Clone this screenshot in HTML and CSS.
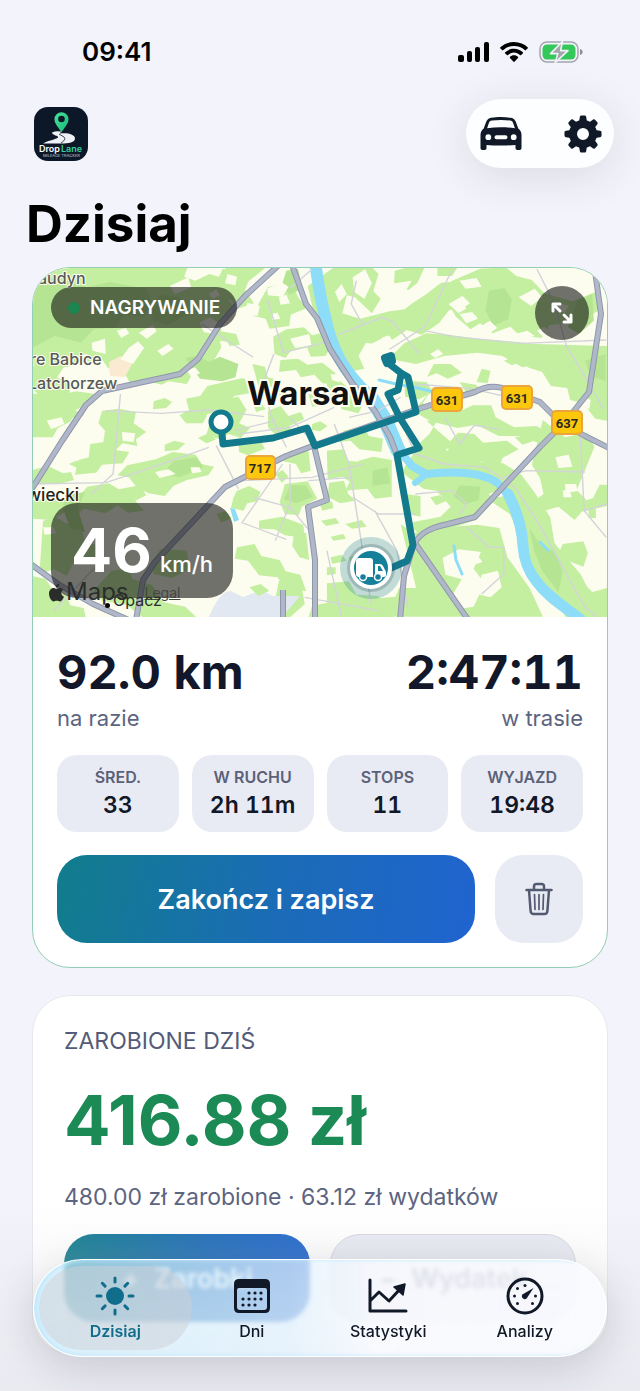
FILE: index.html
```html
<!doctype html>
<html lang="pl">
  <head>
    <meta charset="UTF-8" />
    <meta name="viewport" content="width=device-width, initial-scale=1.0" />
    <title>Drop Lane - Dzisiaj</title>
    <link rel="stylesheet" href="styles.css">
  </head>
  <body>
    <div class="status-bar">
      <span class="status-time">09:41</span>
      <div class="status-icons">
        <svg width="31" height="20" viewBox="0 0 31 20">
          <rect x="0" y="13" width="6" height="7" rx="2" />
          <rect x="9" y="9" width="5" height="11" rx="2" />
          <rect x="17" y="5" width="5" height="15" rx="2" />
          <rect x="26" y="0" width="5" height="20" rx="2" />
        </svg>
        <svg width="28" height="20" viewBox="0 0 28 20">
          <path d="M14 0C8.500 0 3.600 2.100.400 5.300c-.4.400-.4.800 0 1.200l1.700 1.600c.4.400.8.400 1.200 0C6 5.400 9.800 4 14 4s8 1.400 10.700 4.100c.4.400.8.400 1.200 0l1.700-1.600c.4-.4.4-.8 0-1.200C24.400 2.100 19.500 0 14 0z" />
          <path d="M14 6.800c-3.400 0-6.500 1.200-8.800 3.400-.4.400-.4.800 0 1.200l1.700 1.600c.4.400.8.300 1.200 0 1.600-1.500 3.600-2.400 5.900-2.400s4.300.9 5.900 2.400c.4.300.8.400 1.200 0l1.700-1.600c.4-.4.4-.8 0-1.200-2.300-2.200-5.400-3.400-8.800-3.400z" />
          <path d="M14 13.200c-1.600 0-3 .6-4 1.500-.4.400-.3.800 0 1.200l3.300 3.600c.4.500 1 .5 1.400 0l3.300-3.600c.3-.4.4-.8 0-1.200-1-.9-2.400-1.500-4-1.500z" />
        </svg>
        <svg width="44" height="22" viewBox="0 0 44 22">
          <rect x="1" y="1" width="38" height="20" rx="7" fill="none" stroke="#a5a6ad" stroke-width="1.500" />
          <path d="M41 8c2 .6 2.600 1.700 2.600 3s-.6 2.400-2.600 3z" fill="#8f9097" />
          <rect x="3.500" y="3.500" width="33" height="15" rx="4.500" fill="#34c759" />
          <path d="M23.500.5 11.500 12.600h7.300L16.300 21.500 29 9.600h-7.400z" fill="#a5a6ad" stroke="#f2f3fb" stroke-width="1.600" stroke-linejoin="round" />
        </svg>
      </div>
    </div>

    <header class="header">
      <svg class="logo" viewBox="0 0 54 54" role="img" aria-label="Drop Lane Mileage Tracker">
        <defs>
          <linearGradient id="pin" x1="0" y1="0" x2="1" y2="1">
            <stop offset="0" stop-color="#4be39a" />
            <stop offset="1" stop-color="#11b877" />
          </linearGradient>
        </defs>
        <rect width="54" height="54" rx="14" fill="#0c1728" />
        <path d="M18 25.500q4-2 9-1l-1 2c8-1 15 1 15 5 0 4-6 5-14 5H9c5-3 13-4 15-6 1-2-6-2-6-5z" fill="#eef2f7" />
        <path d="m25 27 5 3c2 2 0 4-3 6" fill="none" stroke="#0c1728" stroke-width=".8" />
        <path d="M27.500 25.500C25 21 20.500 17 20.500 12.300a7 7 0 0 1 14 0c0 4.700-4.500 8.700-7 13.200z" fill="url(#pin)" />
        <circle cx="27.500" cy="12" r="3.300" fill="#0c1728" />
        <text x="5" y="44.500" class="logo-name">Drop<tspan dx="1" fill="#2fd0a0">Lane</tspan></text>
        <text x="9" y="50" class="logo-sub">MILEAGE TRACKER</text>
      </svg>
      <div class="header-actions">
        <button class="icon-btn" aria-label="Pojazd">
          <svg width="42" height="34" viewBox="0 0 42 34">
            <path fill-rule="evenodd" d="M11 .8c6-1 14-1 20 0 2.500.4 4 2 4.900 4.200l2.400 6.400c2 1.500 3.200 3.800 3.200 6.600v13c0 1.200-.7 2-1.900 2h-2.200c-1.200 0-1.900-.8-1.900-2v-3c-8 .7-21 .7-29 0v3c0 1.200-.7 2-1.900 2H2.400c-1.200 0-1.900-.8-1.900-2V18c0-2.800 1.200-5.100 3.200-6.600L6.100 5C7 2.800 8.500 1.200 11 .8zM12 3.500c-1.800.3-2.600 1-3.200 2.700l-1.700 5c9-1.200 18.800-1.200 27.800 0l-1.700-5c-.6-1.700-1.400-2.400-3.200-2.700-5.500-.8-12.500-.8-18 0zM8.300 17.300a2.900 2.900 0 1 0 0 5.800 2.900 2.900 0 0 0 0-5.800zm25.400 0a2.900 2.900 0 1 0 0 5.800 2.900 2.900 0 0 0 0-5.800zM16.500 18.300a2 2 0 0 0 0 4h9a2 2 0 0 0 0-4z" />
          </svg>
        </button>
        <button class="icon-btn" aria-label="Ustawienia">
          <svg width="38" height="38" viewBox="-19 -19 38 38">
            <defs>
              <path id="tooth" d="M-4-12-3.200-17c.2-1 .8-1.500 1.700-1.500h3c.9 0 1.500.5 1.700 1.500L4-12z" />
            </defs>
            <use href="#tooth" />
            <use href="#tooth" transform="rotate(45)" />
            <use href="#tooth" transform="rotate(90)" />
            <use href="#tooth" transform="rotate(135)" />
            <use href="#tooth" transform="rotate(180)" />
            <use href="#tooth" transform="rotate(225)" />
            <use href="#tooth" transform="rotate(270)" />
            <use href="#tooth" transform="rotate(315)" />
            <circle r="10" fill="none" stroke="#111827" stroke-width="8" />
          </svg>
        </button>
      </div>
    </header>

    <h1 class="page-title">Dzisiaj</h1>

    <main class="content">
      <section class="card trip-card">
        <div class="map">
          <svg class="map-canvas" viewBox="33 268 574 349" preserveAspectRatio="xMidYMid slice">
            <rect x="0" y="200" width="700" height="500" fill="#fdfdef" />

            <!-- parks and forests -->
            <g transform="translate(32 264) scale(.3686 .3333)" fill="#c4efa1">
              <path d="M0 0h425l-12 38 30 12 38-20 25 8 30-38h110l-70 62-32 12-12 34 20 22-34 24-6 48 42 8 10 32-50 8-22 42-10 30-48 10-14 28-50-8-18 10-50-14-34 12-18-34-44-14-20-32-36 14v-24l-22 4-6 30-36 6-18 30 40 22-8 28 34 10-18 38 26 16-60 16L0 372z" />
              <path d="M0 388l60 8 60-14 52 8-24 30-34 22-8 30-36 20-14 28H0z" />
              <path d="m190 440 46-6 46 10-6 34 34 26-28 22 4 20-40-8-24 26-32-4 8-60-18-22z" />
              <path d="m158 540 60-10 10 28 36 6-18 34-56 4-16 24-58 6 10-44 28-8z" />
              <path d="m0 618 44-12 40 22 22-4 8 24-40 12H0z" />
              <path d="m258 604 78-18 46-22 62 8 16 28 34 8-16 26-58 14-36 18-24 30-44-8-30-16-24-32-30-6z" />
              <path d="m150 668 58-10 28 18 56-12 18 30-30 16 24 30-44 6-28-22-32 24-60-14-20 22-30-12-38 24-52-4v-56l70-4 18 10 32-8z" />
              <path d="m30 770 34-12 28 20 40 4 12 54 46 10-12 36-60 4-24 50-34-20-40 14z" />
              <path d="m350 854 70 6 8 56-48 26-50-12-8-34zM216 920l46-6 10 30 54 20 30 50 60 14 30 32H300l-44-38-66-12-24-28z" />
              <path d="m0 936 36 8 20 32 38 18 10 30 36 8 6 28H0z" />
              <path d="m516 16 62-6 14 28-14 40 24 40-44 16-20-26-34 4-10-30zM640 70l60-20 24 52 22 30-44 20-4 34-54 8-10-30-34-8 16-40z" />
              <path d="m654 218 36-22 48-6 22 24 22-6 26 46-12 22-40 2-10-28-42 8-16 24-30-12zm20 70 48-4 26 18 40-6 34 30 10 38-44-6-22-26-36 8-14-22-46 6z" />
              <path d="m598 300 34 8 8 32 28 8-6 22-48-4zm-60 50 34-8 30 16-12 30-42 8-24 46-48 8-14 28-44 0-18-24 26-16-8-34 38-8 20-30zM500 410l60-12 22 40-20 40 30 14-26 30-32-12-26 14-36-8z" />
              <path d="m640 440 34-14 22 30 34-12 8 22-40 20 12 22-48 6-22-24zM560 540l60-10 12 24-46 20-24-10z" />
              <path d="m800 360 30-14 42 38 24 40-10 24-46-12-8-36-32-12zM846 500l54-14 14 30 38 8-4 40-60-8-24-26-36 4z" />
              <path d="m700 560 50 0 6 60-26 8-14-28-34-8zm100 0 46-4 10 34 60 6-8 50-40 12-26-20-40 8zM686 660l62-8 26 52-42 24-8 26-38-4-14-36zm120-4 40-6 12 40 20 20-42 8-34-20z" />
              <path d="m556 680 34-14 30 18-10 28-26 6-10 22-34-8 6-30zm60 90 62-12 58 24 4 40-54-8-28-18-42-2zm-60 80 48-10 18 36 50 12 16 34 40 10 16 50-60-12-18-30-50-6-30-44-36-6z" />
              <path d="m712 800 32 8 8 80-26-8-20-34zm72-30 40-8 10 16-36 8zm66 10 44-12 14 20-40 6zm-40 38 34-8 8 14-34 6z" />
              <path d="m800 958 60-6 20 40 60 4 40 64H750l10-34 40-10zM670 950l60 10 10 60-40 40-60 0-20-36 40-20z" />
              <path d="m832 0 82 0 26 30-14 52 20 22-24 44-46-48-22-6-12 54 48 16 80-22 54-8 14 18-16 42-40 30-36 20-40-8-20 40 16 38-34 8-46-48-28-42-34-106-12-60z" />
              <path d="m984 20 42-12 40 0-20 48-24 22-40-10zM1070 90l40-34 42-4 36 30-20 22 24 28-60 6-28 40-46 34-42-14 14-40-34-10 36-30z" />
              <path d="m1100 0 60 0-20 36-40 0zm40 50 76-36 70-4 28 26 42 12 34 40 76 24 68-30 10 52-30 22-40-4-16 24-54 8-22 38-60-8-24-26-48 20-34-30-26 18-40-38-20-40-36-20z" />
              <path d="m1010 238 60-30 60 4 80 12 160 16 190 6v36l-72 0-30 24-60-8-68 12-54-34-68-10-90 10-76 24-74-16z" />
              <path d="m1404 255 64 5 92 0v200l-36-8-24-32-40-12-8-36-44-6-24-42-40-14z" />
              <path d="m1090 300 46 0 30 26-38 18-30-16-26 10zm-80 50 60 4 18 30-38 22-38-8zm210-36 24 6-8 38-30-4zm-60 40 44 8 22 22-44 10zM1080 384l-20 34 32 22 64 4 40-20 50 0 12 36 50 30 60-4 40 20 24 24-42 14-64-28-60 0-60-34-52 10-72-20-48-30z" />
              <path d="m1070 470 28 2-20 38-40 42 60 22 32-22-6 44 40 26 56-30 46 30 10-40 44-26-32-26-64 6-24-26-44-4-22 26z" />
              <path d="m1386 468 60 52 58-14 22 42-22 60-26 70 34 40-40 50-44-40-60 20-10-34 30-24-10-48-22-40z" />
              <path d="m1040 560 56-20 52 34 66 20 64 4 48 32 38 56 42 74 12 80 70 90 60 130h-100l-40-80-32-16-40-74-14-80-26-60-60-44-104-20-70-12-60-50z" />
              <path d="m1128 660 62-30 76 36-26 60-36 42-64 24-92 16-30-30 90-20 28-30-36-44z" />
              <path d="m850 680 60-6 20 30 46-6 0-110-50-10-40 12-12 38zM1010 690l44 6 0 62-38-8z" />
              <path d="m1000 780 36 28 60-16 112-10 60 10 22 88 60 92 36 86h-440l-20-54 60-6 10-26 46 0z" />
              <path d="m1360 788 28 10 70 94-30 20-40-40-30-16zM1440 840l56-8 12 36-12 40-40-16-26-28zm100-178 20 0v64l-72 18-12-24 46-18z" />
              <path d="m1460 960 34-6 26 30 40-12v90h-42l-30-40-30-16z" />
              <path d="m1480 410 52-14 28 24v50l-32-6-24-34z" />
            </g>

            <!-- denser woodland -->
            <g transform="translate(32 264) scale(.3686 .3333)" fill="#b5e592">
              <path d="m0 60 60-20 90 30 60-16 100 20 20 50-30 34-50-6-22 40-60 4-36 40-70-20-62 36z" />
              <path d="m350 92 50 10 20 50-50 30-40-10-14-40zm66 190 34-8 30 20 30-16 50 22-8 40-36 12-60-8-20-30z" />
              <path d="m690 20 32-6 12 60-36 18-20-30zm550 60 42-8 20 34-10 60-42 20-20-48zm240 30 40-20 4 80-40 40-30-20zm20 180 56-20v80l-40-12z" />
              <path d="m386 590 60-10 20 30-66 30-46-12zM90 694l54-10-20 50 20 70-40-10-20-60zm610-30 42 0 20 34-44 20-34-12z" />
              <path d="m924 620 40-10 8 48-48 8zM1160 664l56 4-4 40-38 14-30-26zm190 130 30 50 40 20 20 60-12 60-44-64-22-60z" />
            </g>
            <path d="M209 617c5-12 12-26 22-26l12 6 18-7 12 6 27 0-18 21z" fill="#e2e8f1" />
            <path d="m109 362 12-6 11 8-7 13-15-1z" fill="#fbead2" />

            <!-- fields and housing -->
            <g transform="translate(32 264) scale(.3686 .3333)" fill="#fdfdef">
              <path d="m162 236 36-12 2 46-36-10zm78 50 22-34 26-20 16 20-30 48zm50-80 38-24 10 20-26 22zm84-140 50-26 8 30-44 20zm80 110 30-16 24 20-8 32-34-8zm130-60 34 10-6 30-34-6zm54-42 38-20 20 14-16 30-40-4zM870 40l34-24 18 42-20 46-28-20zm100 20 60-10-30 56-36 10zm-50 180 46-26 10 34-40 24zM1130 120l38-24 20 22-34 26zm70 80 42-30 20 22-40 30zm-40-50 34-6 16 20-32 14zm160-50 44-26 20 26-30 26zm-10 110 34-10 20 16-40 10zm-150-160 46-8 14 26-44 6z" />
              <path d="m700 224 52-14 6 34-44 8zm-340 260 40-10 20 26-40 16zm-160 280 38-6 18 26-44 8zm914 118 44-26 60 8-20 50 30 44-30 70-44 8-10-50 22-40-44-14zm106 50 44-12 10 50-30 30-36-10z" />
              <path d="m40 470 40-10 8 20-36 16zm204 34 36 4-4 26-30-4zm90 120 36-8 20 14-44 12zM1420 580l36-8 10 36-38 4zm26 80 30 0 4 22-32 4z" />
              <path d="m230 200 24-8 10 16-22 14zm190 120 22-10 14 18-24 10zm-80-60 30-20 14 14-30 22zm170-30 20 4 12 24-28-6zm20-200 26 8-4 26-28-6zm140 70 20-8 10 26-26 4zm-20 50 16-4 8 18-22 4zm160 180 18 2 8 24-22-8zm30-270 14 30-20 24-12-30zm110 160 20-4 10 18-24 8zm130 50 22-14 14 14-22 12zm70-140 22-10 6 14-22 14zm220 70 20-12 12 14-18 14zm60-80 26 4-10 22-22-8zm70 280 16 8-4 28-20-12zm-60 280 18-6 6 26-22 0zm-200 10 28-12 12 18-30 8zm-60 190 30-4 12 18-32 12zM60 560l26-6 10 14-28 8zm-30 230 28 0 8 18-32 4zm400-180 24 0 6 14-26 4zm120-30 24-4 8 14-28 6zM480 90l20-14 10 18-20 10z" />
            </g>
            <g transform="translate(32 264) scale(.3686 .3333)" fill="#c4efa1">
              <path d="m330 412 30-10 20 12-16 18-36 4zm120 40 24 4-10 20-20-4zm-90 90 26-12 30 8-20 20-36 4zm90-20 24-12 26 16-26 12zM100 600l20-10 30 10-20 16zm500-180 20-6 14 22-26 8zm60-50 40 6-8 18-34 0zm90 20 28 4 12 30-30 4zm10 90 22-8 20 14-20 16-24-4zm-100 150 20-12 16 20-18 18zm120 90 34-8 4 20-30 8zm30 160 30-8 14 18-40 10zm100-20 22-10 10 26-28 6zm170-160 26-6 20 16-30 14zm110-240 20-10 24 14-24 12zm120 60 30-6 20 18-30 10zm100-60 20 0 10 22-26 4zM500 750l24-8 18 20-28 14zm90 220 30-10 24 20-30 16zM860 880l26-10 12 24-30 8zm-60 30 24 0 0 20-24 4zM1100 850l26-6 4 24-22 8zm180-560 30-12 20 14-28 12zm230 440 20 6 0 26-20 0z" />
            </g>

            <!-- water -->
            <g fill="none" stroke="#8ddcf8" stroke-linejoin="round" stroke-linecap="round">
              <path d="M315 262c3 20 5 36 10 54 3 16 6 26 14 42 8 15 20 28 33 40" stroke-width="12" />
              <path d="m370 396 16 26 12 28" stroke-width="15" />
              <path d="m396 446 16 20 14 8c26-2 46-3 65 5 10 5 15 12 20 23" stroke-width="8" />
              <path d="m427 474-12 9" stroke-width="6" />
              <path d="M508 494c8 15 14 34 15 52 1 15 5 25 14 36 11 15 28 25 43 37" stroke-width="11" />
              <path d="m379 380 17 4 22 4 16 4M454 546l2 14 6 14M540 542l8 8" stroke-width="3" />
            </g>
            <path d="m230 508 5 1 4 11-5 2z" fill="#8ddcf8" />

            <!-- minor roads -->
            <g transform="translate(32 264) scale(.3686 .3333)" fill="none" stroke="#d3d4da" stroke-width="4">
              <path d="M1140 16 1066 188 970 256M830 212l120-52 28 12 74 100M880 50l-14 70 30 60M1066 200l80 18 184 20 228-10M1370 16l46 100 34 130 60 110 40 80M1120 460l40 80 40-56 70 12M640 110l42 156 110-30M656 270l-30 90 24 100 40 90M460 180l140 100M240 390l-20 240-60 60M200 440l150 8 130-10 150 20M480 550 300 620 200 656 0 660M500 545l60 130M680 600l-110 176 120 50M700 600l0 120-40 110M760 16l-60 56" />
              <path d="m900 600-140 40-190 10M820 480l40 120 60 420M870 700l70 50 100 0M930 740l60 120 30 170M1040 690l100-10 40 40-20 30M860 460l80-20 60-40M1000 470l40 100 80 30 110 10 80 60 60 100 60 120 70 140 70 60M1280 640l60-20 160 4M1486 480l12 260 60 80M1500 740l60-20M1180 790l60 60 40 0 0 80-60 60M1040 360l150 14 120 30M820 430l-120 60-140 20M700 460l50 60M550 500l110-30M600 700l100 30 60 80M750 650l120-10M800 860l40 200M740 1000l200 40M180 900l-120 140" />
            </g>

            <!-- main roads -->
            <g fill="none" stroke-linejoin="round">
              <g stroke="#8f97ad" stroke-width="6">
                <path d="m280 264-35 32-25 28-22 35-18 15-78 17-16 14-24 36-34 54" />
                <path d="m291 262 15 42 11 14 13 31 22 34 23 28 15 26 7 18" />
                <path d="m28 562 30 22 35 20 40 18M136 620l7-40 12-18 70-75 33-17 28-14 29-11 100-35 22-7 38-11c14-8 26-6 37 0l28 10 20 20 25 14 24 12" />
                <path d="m594 264 7 50-12 78-24 30-25 25-65 70-27 7c-20 4-32 11-36 26l-8 26-4 44M415 543l54 78" />
                <path d="m314 446 13 54-19 7 7 53v60M283 590v30" />
              </g>
              <g stroke="#b0b7c9" stroke-width="4">
                <path d="m280 264-35 32-25 28-22 35-18 15-78 17-16 14-24 36-34 54" />
                <path d="m291 262 15 42 11 14 13 31 22 34 23 28 15 26 7 18" />
                <path d="m28 562 30 22 35 20 40 18M136 620l7-40 12-18 70-75 33-17 28-14 29-11 100-35 22-7 38-11c14-8 26-6 37 0l28 10 20 20 25 14 24 12" />
                <path d="m594 264 7 50-12 78-24 30-25 25-65 70-27 7c-20 4-32 11-36 26l-8 26-4 44M415 543l54 78" />
                <path d="m314 446 13 54-19 7 7 53v60M283 590v30" />
              </g>
            </g>

            <!-- recorded route -->
            <g fill="none" stroke="#13798c" stroke-width="7" stroke-linejoin="round" stroke-linecap="round">
              <path d="m221 424 2 20 50-6 34-10 8 18 101-34-8-35-7-4-13-10" />
              <path d="m401 374-3 16-10 4 12 24 19 30-22 7 16 90-6 16-16 7" />
              <path d="m385 358 6-2 1 5-5 2z" stroke-width="8" />
            </g>
            <circle cx="221" cy="422" r="10" fill="#fff" stroke="#13798c" stroke-width="5" />

            <!-- road numbers -->
            <g class="shield">
              <rect x="432" y="388" width="30" height="23" rx="4" />
              <rect x="502" y="386" width="30" height="23" rx="4" />
              <rect x="552" y="411" width="30" height="23" rx="4" />
              <rect x="246" y="456" width="29" height="23" rx="4" />
              <text x="447" y="405">631</text>
              <text x="517" y="403">631</text>
              <text x="567" y="428">637</text>
              <text x="260" y="473">717</text>
            </g>

            <g class="place">
              <text x="38" y="284">audyn</text>
              <text x="30" y="365">re Babice</text>
              <text x="28" y="389">Latchorzew</text>
              <text x="27" y="501" class="town">wiecki</text>
              <text x="247" y="405" class="city">Warsaw</text>
            </g>

            <!-- current position -->
            <circle cx="371" cy="568" r="31" fill="#13798c" opacity=".25" />
            <circle cx="371" cy="568" r="24" fill="#33505a" opacity=".25" />
            <circle cx="371" cy="568" r="19" fill="#15809a" stroke="#fff" stroke-width="4" />
            <path d="M359 558h11q3 0 3 3v16h-14q-3 0-3-3v-13q0-3 3-3zM375 564h5q2 0 3 2l2 4q1 1 1 3v2q0 2-2 2h-9z" fill="#fff" />
            <path d="M378 566h2l3 5h-5z" fill="#15809a" />
            <circle cx="363" cy="577" r="3.500" fill="#15809a" stroke="#fff" stroke-width="1.500" />
            <circle cx="378" cy="577" r="3.500" fill="#15809a" stroke="#fff" stroke-width="1.500" />
          </svg>

          <div class="recording"><span class="dot"></span>NAGRYWANIE</div>
          <button class="expand" aria-label="Powiększ mapę">
            <svg width="24" height="24" viewBox="0 0 24 24" fill="none" stroke="#fff" stroke-width="3" stroke-linecap="round" stroke-linejoin="round">
              <path d="M3 10V3h7M3 3l7 7M21 14v7h-7M21 21l-7-7" />
            </svg>
          </button>
          <div class="speed"><strong>46</strong> km/h</div>
          <div class="map-credit">
            <svg width="15" height="19" viewBox="0 0 15 19">
              <path d="M10.400.5c.1 2.300-1.800 4.200-3.600 4C6.600 2.500 8.500.6 10.400.5zM7.500 5.800c.9 0 1.700-.9 3.400-.9 1.300 0 2.600.7 3.400 1.900-3 1.700-2.400 5.700.7 6.900-.9 2.600-2.400 4.800-4.100 4.800-1.200 0-1.600-.7-3.100-.7s-2 .7-3.100.7C2.500 18.500 0 14.300 0 10.800 0 7.200 2.200 5 4.400 5c1.400 0 2.300.8 3.100.8z" />
            </svg>
            <span class="credit-name">Maps</span>
            <a class="credit-legal" href="#">Legal</a>
            <span class="credit-place">Opacz</span>
          </div>
        </div>

        <div class="trip-body">
          <div class="totals">
            <div>
              <div class="total-value">92.0 km</div>
              <div class="total-label">na razie</div>
            </div>
            <div class="total-right">
              <div class="total-value">2:47:11</div>
              <div class="total-label">w trasie</div>
            </div>
          </div>

          <div class="stats">
            <div class="stat"><span class="stat-label">ŚRED.</span><span class="stat-value">33</span></div>
            <div class="stat"><span class="stat-label">W RUCHU</span><span class="stat-value">2h 11m</span></div>
            <div class="stat"><span class="stat-label">STOPS</span><span class="stat-value">11</span></div>
            <div class="stat"><span class="stat-label">WYJAZD</span><span class="stat-value">19:48</span></div>
          </div>

          <div class="trip-actions">
            <button class="finish-btn">Zakończ i zapisz</button>
            <button class="delete-btn" aria-label="Usuń">
              <svg width="28" height="34" viewBox="0 0 28 34" fill="none" stroke="#525a72" stroke-linecap="round" stroke-linejoin="round">
                <path d="M1.500 8h25M9 8V4.500Q9 2 11.500 2h5Q19 2 19 4.500V8M4 8l1.600 21q.2 3 3.200 3h10.400q3 0 3.200-3L24 8" stroke-width="2.500" />
                <path d="m9.500 12.500.5 15M14 12.500v15M18.500 12.500l-.5 15" stroke-width="1.700" />
              </svg>
            </button>
          </div>
        </div>
      </section>

      <section class="card earnings-card">
        <h2 class="earnings-title">ZAROBIONE DZIŚ</h2>
        <div class="earnings-value">416.88 zł</div>
        <p class="earnings-note">480.00 zł zarobione · 63.12 zł wydatków</p>
        <div class="earnings-actions">
          <button class="add-btn income"><span>+</span>Zarobki</button>
          <button class="add-btn expense"><span>−</span>Wydatek</button>
        </div>
      </section>
    </main>

    <div class="bottom-shade"></div>
    <nav class="tab-bar">
      <a class="tab active" href="#">
        <svg width="40" height="40" viewBox="0 0 40 40" stroke="currentColor" stroke-width="3" stroke-linecap="round">
          <circle cx="20" cy="20" r="9" fill="currentColor" stroke="none" />
          <path d="M20 2v4M20 34v4M2 20h4M34 20h4M7.300 7.300l2.800 2.800M29.900 29.900l2.800 2.800M7.300 32.700l2.800-2.800M29.900 10.100l2.800-2.800" />
        </svg>
        Dzisiaj
      </a>
      <a class="tab" href="#">
        <svg width="40" height="40" viewBox="0 0 40 40">
          <path fill-rule="evenodd" d="M7 3h26q5 0 5 5v24q0 5-5 5H7q-5 0-5-5V8q0-5 5-5zM7 12q-2 0-2 2v17q0 3 3 3h24q3 0 3-3V14q0-2-2-2z" />
          <g>
            <circle cx="17" cy="17" r="1.600" /><circle cx="23" cy="17" r="1.600" /><circle cx="29" cy="17" r="1.600" />
            <circle cx="11" cy="23" r="1.600" /><circle cx="17" cy="23" r="1.600" /><circle cx="23" cy="23" r="1.600" /><circle cx="29" cy="23" r="1.600" />
            <circle cx="11" cy="29" r="1.600" /><circle cx="17" cy="29" r="1.600" /><circle cx="23" cy="29" r="1.600" />
          </g>
        </svg>
        Dni
      </a>
      <a class="tab" href="#">
        <svg width="40" height="40" viewBox="0 0 40 40" fill="none" stroke="currentColor" stroke-width="3" stroke-linecap="round" stroke-linejoin="round">
          <path d="M2 4v31h36M3 24l8-8 10 9 12-13" />
          <path d="m37 8-2 11-9-8z" fill="currentColor" stroke-width="1.500" />
        </svg>
        Statystyki
      </a>
      <a class="tab" href="#">
        <svg width="40" height="40" viewBox="0 0 40 40">
          <circle cx="20" cy="20" r="17" fill="none" stroke="currentColor" stroke-width="3" />
          <path d="M28.500 12 21.800 22.300a2.800 2.800 0 1 1-4-4z" />
          <circle cx="20" cy="9.500" r="1.500" /><circle cx="12.500" cy="12.500" r="1.500" /><circle cx="9.500" cy="20" r="1.500" />
          <circle cx="30.500" cy="20" r="1.500" /><circle cx="12.500" cy="27.500" r="1.500" /><circle cx="27.500" cy="27.500" r="1.500" />
        </svg>
        Analizy
      </a>
    </nav>
  </body>
</html>
```

FILE: styles.css
```css
* {
  box-sizing: border-box;
}

body {
  margin: 0;
  min-height: 100vh;
  padding-bottom: 36px;
  background-color: #f2f3fb;
  font-family: Inter, 'Noto Sans', sans-serif;
  color: #111827;
}

button {
  border: none;
  padding: 0;
  font-family: inherit;
  cursor: pointer;
}

svg {
  display: block;
}

.status-bar {
  display: flex;
  justify-content: space-between;
  align-items: center;
  height: 99px;
  padding: 4px 57px 0 82px;
  color: #000;
}

.status-time {
  font-size: 26px;
  font-weight: 600;
}

.status-icons {
  display: flex;
  align-items: center;
  gap: 11px;
}

.header {
  display: flex;
  justify-content: space-between;
  align-items: center;
  padding: 0 26px 0 34px;
}

.logo {
  width: 54px;
  height: 54px;
}

.logo-name {
  font-size: 9px;
  font-weight: 600;
  fill: #fff;
}

.logo-sub {
  font-size: 4px;
  fill: #c5ccd8;
}

.header-actions {
  display: flex;
  justify-content: space-between;
  width: 148px;
  height: 69px;
  padding: 0 12px 0 14px;
  border-radius: 35px;
  background-color: #fcfeff;
  box-shadow: 0 8px 44px rgba(60, 60, 50, 0.12);
}

.icon-btn {
  display: flex;
  align-items: center;
  background: none;
  fill: #111827;
}

.page-title {
  margin: 25px 26px 13px;
  font-size: 51px;
  line-height: 61px;
  font-weight: 700;
  color: #000;
}

.content {
  display: flex;
  flex-direction: column;
  gap: 27px;
  padding: 0 32px;
}

.card {
  background-color: #fff;
  border: 1px solid #e6e8ef;
  border-radius: 38px;
  overflow: hidden;
}

.trip-card {
  border-color: #93cdb3;
}

.map {
  position: relative;
  height: 349px;
}

.map-canvas {
  width: 100%;
  height: 100%;
}

.shield rect {
  fill: #fdc70e;
  stroke: #eba53a;
  stroke-width: 2;
}

.shield text {
  font-family: Roboto, sans-serif;
  font-size: 13px;
  font-weight: 700;
  text-anchor: middle;
  fill: #2b2a20;
}

.place text {
  font-size: 16px;
  font-weight: 500;
  fill: #565b58;
  stroke: #fdfdef;
  stroke-width: 2;
  paint-order: stroke;
}

.place .town {
  font-size: 17px;
  fill: #222;
}

.place .city {
  font-size: 33px;
  font-weight: 700;
  fill: #111;
  stroke-width: 4;
}

.recording,
.expand,
.speed {
  position: absolute;
  display: flex;
  align-items: center;
  background-color: rgba(20, 20, 20, 0.6);
  color: #fff;
}

.recording {
  top: 19px;
  left: 18px;
  height: 41px;
  padding: 0 17px;
  gap: 10px;
  border-radius: 21px;
  font-size: 19px;
  font-weight: 600;
}

.dot {
  width: 12px;
  height: 12px;
  border-radius: 50%;
  background-color: #1c8550;
}

.expand {
  top: 18px;
  right: 18px;
  width: 54px;
  height: 54px;
  justify-content: center;
  border-radius: 50%;
}

.speed {
  left: 18px;
  bottom: 19px;
  height: 95px;
  padding: 0 20px;
  align-items: baseline;
  gap: 8px;
  border-radius: 26px;
  font-size: 22px;
  line-height: 94px;
  font-weight: 500;
}

.speed strong {
  font-size: 61px;
  font-weight: 700;
}

.map-credit {
  position: absolute;
  left: 16px;
  bottom: 8px;
  display: flex;
  align-items: center;
  color: #2b2d2c;
  fill: #2b2d2c;
}

.credit-name {
  margin-left: 2px;
  font-size: 24px;
  line-height: 34px;
}

.credit-legal {
  margin-left: 16px;
  font-size: 14px;
  color: #454745;
}

.credit-place {
  position: absolute;
  left: 64px;
  bottom: 0;
  font-size: 16px;
  line-height: 18px;
}

.credit-place::before {
  content: '';
  position: absolute;
  left: -8px;
  bottom: 1px;
  width: 5px;
  height: 5px;
  border-radius: 50%;
  background-color: #000;
}

.trip-body {
  padding: 27px 24px 24px;
}

.totals {
  display: flex;
  justify-content: space-between;
}

.total-right {
  text-align: right;
}

.total-value {
  font-size: 47px;
  line-height: 56px;
  font-weight: 700;
  font-variant-numeric: tabular-nums;
  color: #12172a;
}

.total-label {
  margin-top: 4px;
  font-size: 22px;
  line-height: 28px;
  color: #5c6480;
}

.stats {
  display: grid;
  grid-template-columns: repeat(4, 1fr);
  gap: 13px;
  margin-top: 23px;
}

.stat {
  display: flex;
  flex-direction: column;
  align-items: center;
  height: 77px;
  padding-top: 12px;
  border-radius: 20px;
  background-color: #e9ebf4;
}

.stat-label {
  font-size: 16px;
  line-height: 20px;
  font-weight: 600;
  color: #5a6178;
}

.stat-value {
  margin-top: 4px;
  font-size: 23px;
  line-height: 28px;
  font-weight: 600;
  font-variant-numeric: tabular-nums;
}

.trip-actions {
  display: flex;
  gap: 20px;
  margin-top: 23px;
}

.finish-btn {
  flex-grow: 1;
  height: 88px;
  border-radius: 30px;
  background: linear-gradient(100deg, #117d8c, #1b6bb8 55%, #2064d0);
  font-size: 27px;
  font-weight: 600;
  color: #fff;
}

.delete-btn {
  display: flex;
  justify-content: center;
  align-items: center;
  width: 88px;
  height: 88px;
  border-radius: 28px;
  background-color: #e9ebf4;
}

.earnings-card {
  padding: 31px;
}

.earnings-title {
  margin: 0;
  font-size: 23px;
  line-height: 28px;
  font-weight: 400;
  color: #535b78;
}

.earnings-value {
  margin-top: 25px;
  font-size: 69px;
  line-height: 80px;
  font-weight: 700;
  color: #1c8a55;
}

.earnings-note {
  margin: 23px 0;
  font-size: 23px;
  line-height: 28px;
  color: #5c6480;
}

.earnings-actions {
  display: grid;
  grid-template-columns: 1fr 1fr;
  gap: 20px;
}

.add-btn {
  display: flex;
  justify-content: center;
  align-items: center;
  gap: 14px;
  height: 88px;
  border-radius: 30px;
  font-size: 27px;
  font-weight: 600;
}

.income {
  background: linear-gradient(100deg, #117d8c, #1b6bb8 55%, #2064d0);
  color: #fff;
}

.expense {
  background-color: #e9ebf4;
  border: 1px solid #d5d7df;
  color: #5c6480;
}

.bottom-shade {
  position: fixed;
  left: 0;
  right: 0;
  bottom: 0;
  height: 190px;
  background: linear-gradient(rgba(225, 226, 230, 0), rgba(225, 226, 230, 0.5));
  pointer-events: none;
}

.tab-bar {
  position: fixed;
  left: 33px;
  right: 33px;
  bottom: 34px;
  display: grid;
  grid-template-columns: repeat(4, 1fr);
  height: 98px;
  padding: 6px 13px;
  border: 1px solid #fff;
  border-radius: 49px;
  background: linear-gradient(90deg, rgba(200, 238, 255, 0.6), rgba(225, 242, 255, 0.68) 45%, rgba(250, 251, 255, 0.78) 60%, rgba(250, 251, 255, 0.85));
  backdrop-filter: blur(2px);
  box-shadow: 0 10px 40px rgba(40, 40, 50, 0.18), inset 4px 0 4px #c2e9fd;
}

.tab {
  display: flex;
  flex-direction: column;
  align-items: center;
  padding-top: 10px;
  border-radius: 42px;
  font-size: 16px;
  line-height: 24px;
  font-weight: 500;
  color: #111827;
  fill: #111827;
  text-decoration: none;
}

.tab svg {
  margin-bottom: 3px;
}

.tab.active {
  /* the pill spreads a little past its column */
  margin: 0 -8px;
  background-color: rgba(205, 208, 214, 0.5);
  color: #116d8c;
  font-weight: 600;
}
```
